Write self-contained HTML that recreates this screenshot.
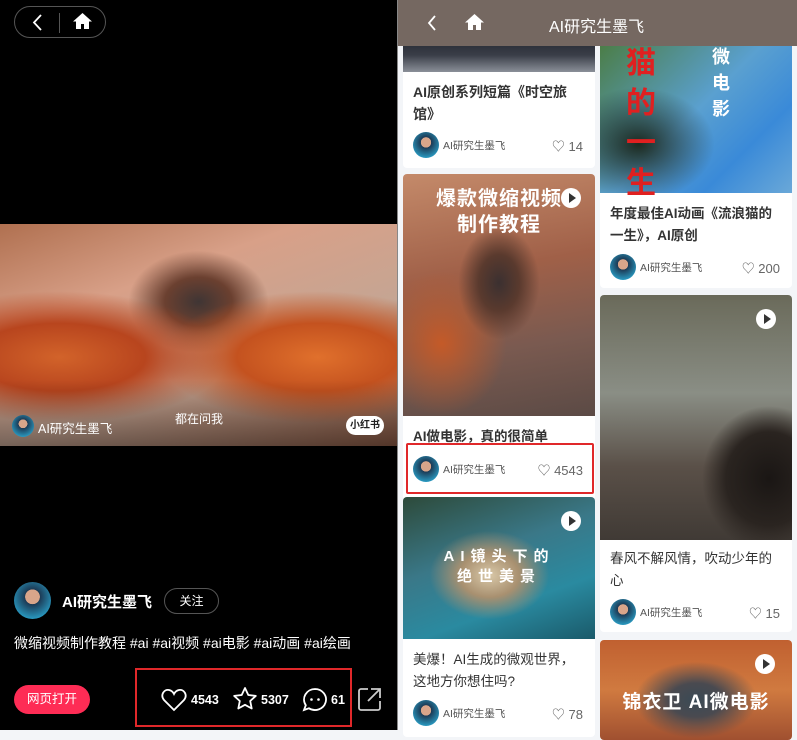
<!DOCTYPE html>
<html><head><meta charset="utf-8">
<style>
*{margin:0;padding:0;box-sizing:border-box}
body{width:797px;height:730px;overflow:hidden;background:#f3f5f8;font-family:"Liberation Sans","Noto Sans CJK SC",sans-serif;position:relative}
.a{position:absolute}
#L{left:0;top:0;width:397px;height:730px;background:#000}
.card{position:absolute;background:#fff;border-radius:4px;overflow:hidden}
.t{position:absolute;left:10px;right:10px;font-size:13.5px;line-height:22px;color:#333}
.u{position:absolute;left:10px;font-size:10.5px;color:#555;display:flex;align-items:center}
.av{width:26px;height:26px;border-radius:50%;background:radial-gradient(circle at 50% 40%,#d9a58a 0 25%,#1c3a55 26%,#2aa0c8 80%);margin-right:4px}
.lk{position:absolute;right:12px;font-size:13px;color:#666;display:flex;align-items:center;gap:5px}
.play{position:absolute;width:20px;height:20px;border-radius:50%;background:#fff}
.play:after{content:"";position:absolute;left:8px;top:5px;border-left:7px solid #333;border-top:5px solid transparent;border-bottom:5px solid transparent}
</style></head><body>
<div id="L" class="a">
  <div class="a" style="left:14px;top:6px;width:92px;height:32px;border:1px solid #555;border-radius:16px"></div>
  <svg class="a" style="left:31px;top:14px" width="12" height="17" viewBox="0 0 12 17"><path d="M10 1L3 8.5L10 16" stroke="#fff" stroke-width="1.8" fill="none"/></svg>
  <div class="a" style="left:59px;top:13px;width:1px;height:20px;background:#555"></div>
  <svg class="a" style="left:72px;top:12px" width="21" height="18" viewBox="0 0 21 18"><path d="M10.5 1L1 9.5h3V17h5v-5h3v5h5V9.5h3z" fill="#fff"/></svg>
  <div class="a" style="left:0;top:224px;width:397px;height:222px;background:radial-gradient(ellipse at 15% 60%,#d2632a 0,#b8451e 18%,transparent 35%),radial-gradient(ellipse at 80% 60%,#e0702c 0,#c4521f 18%,transparent 35%),radial-gradient(ellipse at 50% 35%,#3f3534 0,#6b4030 12%,transparent 25%),linear-gradient(160deg,#b07050 0%,#d8a088 30%,#c5a593 60%,#8a5a45 100%)"></div>
  <div class="a" style="left:0;top:380px;width:397px;height:66px;background:linear-gradient(#0000,#0006)"></div>
  <div class="a av" style="left:12px;top:415px;width:22px;height:22px"></div>
  <div class="a" style="left:38px;top:418px;font-size:12.5px;color:#fff">AI研究生墨飞</div>
  <div class="a" style="left:175px;top:410px;font-size:12px;color:#fff">都在问我</div>
  <div class="a" style="left:346px;top:416px;width:38px;height:19px;border-radius:10px;background:#fff;font-size:10px;font-weight:bold;color:#222;text-align:center;line-height:19px">小红书</div>
  <div class="a av" style="left:14px;top:582px;width:37px;height:37px"></div>
  <div class="a" style="left:62px;top:591px;font-size:15px;font-weight:bold;color:#fff">AI研究生墨飞</div>
  <div class="a" style="left:164px;top:588px;width:55px;height:26px;border:1px solid #555;border-radius:13px;color:#fff;font-size:12px;text-align:center;line-height:24px">关注</div>
  <div class="a" style="left:14px;top:633px;font-size:14px;color:#fff">微缩视频制作教程 #ai #ai视频 #ai电影 #ai动画 #ai绘画</div>
  <div class="a" style="left:14px;top:685px;width:76px;height:29px;border-radius:15px;background:#fe2c55;color:#fff;font-size:12.5px;text-align:center;line-height:29px">网页打开</div>
  <div class="a" style="left:135px;top:668px;width:217px;height:59px;border:2px solid #e0282a"></div>
  <svg class="a" style="left:161px;top:688px" width="26" height="24" viewBox="0 0 26 24"><path d="M13 22L3 12C-1 7 3 1 8 2c2.5.5 4 2 5 4c1-2 2.5-3.5 5-4c5-1 9 5 5 10z" stroke="#fff" stroke-width="1.8" fill="none"/></svg>
  <div class="a" style="left:191px;top:693px;font-size:12.5px;font-weight:bold;color:#fff">4543</div>
  <svg class="a" style="left:232px;top:686px" width="26" height="26" viewBox="0 0 26 26"><path d="M13 2l3.3 7 7.5.9-5.6 5.1 1.5 7.5L13 18.8 6.3 22.5l1.5-7.5L2.2 9.9l7.5-.9z" stroke="#fff" stroke-width="1.8" fill="none" stroke-linejoin="round"/></svg>
  <div class="a" style="left:261px;top:693px;font-size:12.5px;font-weight:bold;color:#fff">5307</div>
  <svg class="a" style="left:302px;top:687px" width="26" height="26" viewBox="0 0 26 26"><path d="M13 2a11 10.5 0 1 1-6 19.3L2 23l1.8-4.8A11 10.5 0 0 1 13 2z" stroke="#fff" stroke-width="1.8" fill="none"/><circle cx="9.5" cy="12.5" r="1.3" fill="#fff"/><circle cx="16.5" cy="12.5" r="1.3" fill="#fff"/></svg>
  <div class="a" style="left:331px;top:693px;font-size:12.5px;font-weight:bold;color:#fff">61</div>
  <svg class="a" style="left:357px;top:686px" width="26" height="26" viewBox="0 0 26 26"><path d="M11 3H4a2 2 0 0 0-2 2v17a2 2 0 0 0 2 2h17a2 2 0 0 0 2-2v-7M14 3h9v9M23 3L11 15" stroke="#ccc" stroke-width="1.8" fill="none"/></svg>
</div>
<div class="a" style="left:397px;top:0;width:1px;height:730px;background:#888"></div>

<div class="card" style="left:403px;top:30px;width:192px;height:138px">
  <div class="a" style="left:0;top:0;width:192px;height:42px;background:linear-gradient(#1a1d25,#3a3e48 60%,#8a8f98)"></div>
  <div class="t" style="top:51px;font-weight:bold;font-size:14px;right:24px">AI原创系列短篇《时空旅馆》</div>
  <div class="u" style="top:102px"><div class="av"></div>AI研究生墨飞</div>
  <div class="lk" style="top:106px">♡ 14</div>
</div>
<div class="card" style="left:403px;top:174px;width:192px;height:326px">
  <div class="a" style="left:0;top:0;width:192px;height:242px;background:radial-gradient(ellipse at 50% 45%,#3b3030 0,#5a3a2e 15%,transparent 30%),radial-gradient(ellipse at 20% 70%,#c45a28 0,transparent 30%),linear-gradient(170deg,#c48a6a,#a06048 40%,#7a5a50 70%,#5b4a45)"></div>
  <div class="a" style="left:0;top:12px;width:192px;text-align:center;color:#fff;font-size:20px;font-weight:bold;line-height:26px;letter-spacing:1px">爆款微缩视频<br>制作教程</div>
  <div class="play" style="left:158px;top:14px"></div>
  <div class="t" style="top:252px;font-weight:bold">AI做电影，真的很简单</div>
  <div class="u" style="top:282px"><div class="av"></div>AI研究生墨飞</div>
  <div class="lk" style="top:286px">♡ 4543</div>
</div>
<div class="a" style="left:406px;top:443px;width:188px;height:51px;border:2px solid #e0282a;border-radius:2px"></div>
<div class="card" style="left:403px;top:497px;width:192px;height:240px">
  <div class="a" style="left:0;top:0;width:192px;height:142px;background:radial-gradient(ellipse at 45% 55%,#d9c8a8 0,#a89070 20%,transparent 40%),linear-gradient(160deg,#2d4a3a,#3a7888 40%,#2a8aa0 70%,#1a5a6a)"></div>
  <div class="a" style="left:0;top:50px;width:192px;text-align:center;color:#fff;font-size:15px;font-weight:bold;letter-spacing:6px;line-height:20px">AI镜头下的<br>绝世美景</div>
  <div class="play" style="left:158px;top:14px"></div>
  <div class="t" style="top:152px">美爆！AI生成的微观世界，这地方你想住吗?</div>
  <div class="u" style="top:203px"><div class="av"></div>AI研究生墨飞</div>
  <div class="lk" style="top:207px">♡ 78</div>
</div>

<div class="card" style="left:600px;top:30px;width:192px;height:258px">
  <div class="a" style="left:0;top:0;width:192px;height:163px;background:radial-gradient(ellipse at 20% 70%,#1c2a20 0,transparent 35%),linear-gradient(135deg,#4a7a3a,#5aa0d0 50%,#3a8ad8 75%,#6aa8d8)"></div>
  <div class="a" style="left:26px;top:14px;color:#e02020;font-size:30px;font-weight:bold;line-height:40px;width:32px">猫的一生</div>
  <div class="a" style="left:112px;top:14px;color:#fff;font-size:18px;font-weight:bold;line-height:26px;width:20px">微电影</div>
  <div class="t" style="top:173px;font-weight:bold">年度最佳AI动画《流浪猫的一生》，AI原创</div>
  <div class="u" style="top:224px"><div class="av"></div>AI研究生墨飞</div>
  <div class="lk" style="top:228px">♡ 200</div>
</div>
<div class="card" style="left:600px;top:295px;width:192px;height:337px">
  <div class="a" style="left:0;top:0;width:192px;height:245px;background:radial-gradient(ellipse at 88% 75%,#1a1614 0,#2a2420 18%,transparent 28%),linear-gradient(#6a6a5a,#8a8e85 40%,#5a5048 70%,#403a35)"></div>
  <div class="play" style="left:156px;top:14px"></div>
  <div class="t" style="top:253px">春风不解风情，吹动少年的心</div>
  <div class="u" style="top:304px"><div class="av"></div>AI研究生墨飞</div>
  <div class="lk" style="top:308px">♡ 15</div>
</div>
<div class="card" style="left:600px;top:640px;width:192px;height:100px">
  <div class="a" style="left:0;top:0;width:192px;height:100px;background:radial-gradient(ellipse at 50% 60%,#3a4a55 0,#4a4a50 20%,transparent 45%),linear-gradient(#c06030,#d07a40 50%,#a05030)"></div>
  <div class="a" style="left:0;top:47px;width:192px;text-align:center;color:#fff;font-size:19px;font-weight:bold;letter-spacing:1px">锦衣卫 AI微电影</div>
  <div class="play" style="left:155px;top:14px"></div>
</div>

<div class="a" style="left:398px;top:0;width:399px;height:46px;background:#756861"></div>
<svg class="a" style="left:427px;top:15px" width="10" height="16" viewBox="0 0 10 16"><path d="M8 1L2 8l6 7" stroke="#fff" stroke-width="1.8" fill="none"/></svg>
<svg class="a" style="left:464px;top:13px" width="21" height="18" viewBox="0 0 21 18"><path d="M10.5 1L1 9.5h3V17h5v-5h3v5h5V9.5h3z" fill="#fff"/></svg>
<div class="a" style="left:549px;top:13px;color:#fff;font-size:16px">AI研究生墨飞</div>
</body></html>
